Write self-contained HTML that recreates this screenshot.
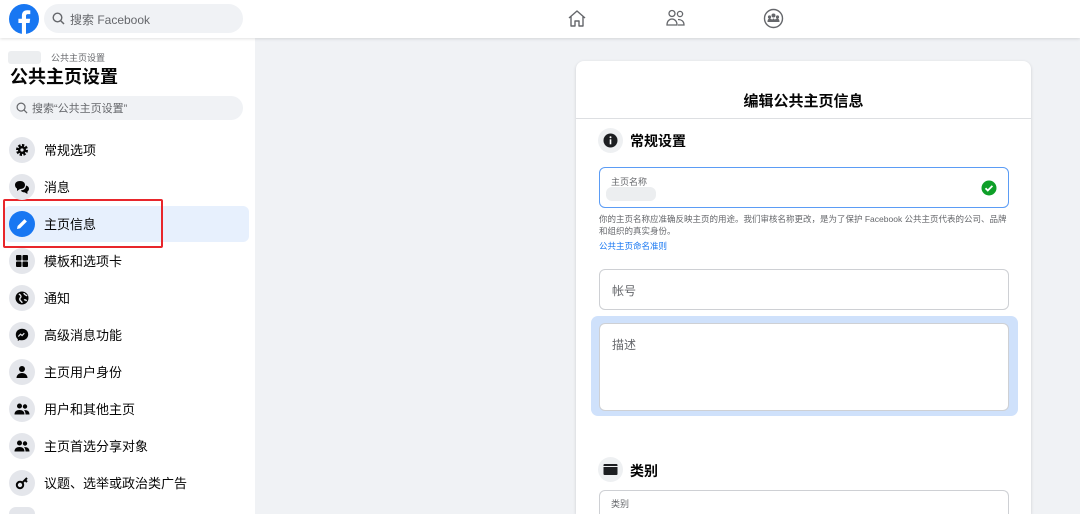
<!DOCTYPE html>
<html style="width:1080px;height:514px;overflow:hidden"><head><meta charset="utf-8"><style>
*{margin:0;padding:0;box-sizing:border-box}
body{width:1080px;height:514px;overflow:hidden;background:#f0f2f5;font-family:"Liberation Sans","Noto Sans CJK SC",sans-serif;color:#050505;position:relative}
.a{position:absolute}
.top{left:0;top:0;width:1080px;height:38px;background:#fff;box-shadow:0 1px 3px rgba(0,0,0,.12);z-index:2}
.side{left:0;top:38px;width:255px;height:476px;background:#fff}
.ic{width:26px;height:26px;border-radius:50%;background:#e4e6eb;left:9px}
.it{left:44px;font-size:13px;color:#050505}
.card{left:576px;top:61px;width:455px;height:453px;background:#fff;border-radius:8px 8px 0 0;box-shadow:0 1px 3px rgba(0,0,0,.15)}
.inp{border:1px solid #ced0d4;border-radius:6px;background:#fff}
</style></head><body>
<div class="a top">
 <svg class="a" style="left:9px;top:4px" width="30" height="30" viewBox="0 0 30 30"><circle cx="15" cy="15" r="15" fill="#1877f2"/><path d="M17 30V19h3.6l.6-4.2H17v-2.7c0-1.2.4-2 2.1-2h2.2V6.4c-.4 0-1.7-.2-3.2-.2-3.1 0-5.2 1.9-5.2 5.4v3.2H9.4V19h3.5v11z" fill="#fff"/></svg>
 <div class="a" style="left:44px;top:4px;width:199px;height:29px;border-radius:15px;background:#f0f2f5"></div>
 <svg class="a" style="left:52px;top:12px" width="13" height="13" viewBox="0 0 13 13"><circle cx="5.5" cy="5.5" r="4.3" fill="none" stroke="#65676b" stroke-width="1.4"/><path d="M8.6 8.6L12 12" stroke="#65676b" stroke-width="1.5"/></svg>
 <div class="a" style="left:70px;top:11px;font-size:12px;color:#65676b">搜索 Facebook</div>
 <svg class="a" style="left:567px;top:9px" width="20" height="19" viewBox="0 0 20 19"><path d="M2 9L10 2l8 7M4 7.5V17h4v-5h4v5h4V7.5" fill="none" stroke="#65676b" stroke-width="1.4" stroke-linejoin="round"/></svg>
 <svg class="a" style="left:666px;top:9px" width="20" height="18" viewBox="0 0 20 18"><circle cx="6" cy="4.5" r="3" fill="none" stroke="#65676b" stroke-width="1.3"/><circle cx="14" cy="5" r="2.6" fill="none" stroke="#65676b" stroke-width="1.3"/><path d="M1 16c0-4 2.5-6 5-6s5 2 5 6zM12 10.5c3 0 6 1.5 6 5.5h-6" fill="none" stroke="#65676b" stroke-width="1.3"/></svg>
 <svg class="a" style="left:763px;top:8px" width="21" height="21" viewBox="0 0 21 21"><circle cx="10.5" cy="10.5" r="9" fill="none" stroke="#65676b" stroke-width="1.4"/><circle cx="10.5" cy="7.5" r="2" fill="#65676b"/><circle cx="6.5" cy="9" r="1.6" fill="#65676b"/><circle cx="14.5" cy="9" r="1.6" fill="#65676b"/><path d="M4.5 14c0-2.5 1-3.5 2-3.5s2.5.5 2.5 1.5c.5-1 1-1.5 1.5-1.5s1 .5 1.5 1.5c0-1 1.5-1.5 2.5-1.5s2 1 2 3.5z" fill="#65676b"/></svg>
</div>
<div class="a side">
 <div class="a" style="left:8px;top:13px;width:33px;height:13px;background:#eceef0;border-radius:3px"></div>
 <div class="a" style="left:51px;top:13px;font-size:9px;color:#65676b">公共主页设置</div>
 <div class="a" style="left:10px;top:25px;font-size:18px;font-weight:bold">公共主页设置</div>
 <div class="a" style="left:10px;top:58px;width:233px;height:24px;border-radius:12px;background:#f0f2f5"></div>
 <svg class="a" style="left:16px;top:64px" width="12" height="12" viewBox="0 0 13 13"><circle cx="5.5" cy="5.5" r="4.3" fill="none" stroke="#65676b" stroke-width="1.3"/><path d="M8.6 8.6L12 12" stroke="#65676b" stroke-width="1.3"/></svg>
 <div class="a" style="left:32px;top:62px;font-size:11px;color:#65676b">搜索“公共主页设置”</div>
 <div class="a" style="left:4px;top:168px;width:245px;height:36px;border-radius:6px;background:#e7f0fd"></div>
 <div class="a" style="left:3px;top:161px;width:160px;height:49px;border:2px solid #e8262b;border-radius:2px"></div>
</div>
<div class="a ic" style="top:137px"></div><div class="a it" style="top:140px">常规选项</div>
<svg class="a" style="left:15px;top:143px" width="14" height="14" viewBox="0 0 14 14"><circle cx="7" cy="7" r="4.5" fill="none" stroke="#050505" stroke-width="3" stroke-dasharray="2.2 1.3"/><circle cx="7" cy="7" r="4" fill="#050505"/><circle cx="7" cy="7" r="1.6" fill="#e4e6eb"/></svg>
<div class="a ic" style="top:174px"></div><div class="a it" style="top:177px">消息</div>
<svg class="a" style="left:14px;top:180px" width="16" height="14" viewBox="0 0 16 14"><path d="M1 5c0-2.5 2-4 5-4s5 1.5 5 4-2 4-5 4l-3 2V8.5C1.8 8 1 6.5 1 5z" fill="#050505"/><path d="M12 5.5c2 .5 3 1.8 3 3.3 0 1.2-.6 2.2-1.6 2.8V14l-2.6-1.6c-2 0-3.4-.8-4-2 3 0 5.2-2 5.2-4.9z" fill="#050505"/></svg>
<div class="a" style="left:9px;top:211px;width:26px;height:26px;border-radius:50%;background:#1877f2"></div><div class="a it" style="top:214px">主页信息</div>
<svg class="a" style="left:15px;top:217px" width="14" height="14" viewBox="0 0 14 14"><path d="M2 12l.6-3L9.5 2.1l2.4 2.4L5 11.4z" fill="#fff"/></svg>
<div class="a ic" style="top:248px"></div><div class="a it" style="top:251px">模板和选项卡</div>
<svg class="a" style="left:15px;top:254px" width="14" height="14" viewBox="0 0 14 14"><rect x="1" y="1" width="5.5" height="5.5" rx="1" fill="#050505"/><rect x="7.5" y="1" width="5.5" height="5.5" rx="1" fill="#050505"/><rect x="1" y="7.5" width="5.5" height="5.5" rx="1" fill="#050505"/><rect x="7.5" y="7.5" width="5.5" height="5.5" rx="1" fill="#050505"/></svg>
<div class="a ic" style="top:285px"></div><div class="a it" style="top:288px">通知</div>
<svg class="a" style="left:15px;top:291px" width="14" height="14" viewBox="0 0 14 14"><circle cx="7" cy="7" r="6.5" fill="#050505"/><path d="M4 3c1 1 2 1 2 2.5S4 7 5 9s2 1 2 3M9 2c0 2 2 1.5 3 3M9 9c1-.5 2 0 2.5 1" stroke="#e4e6eb" stroke-width="1.4" fill="none"/></svg>
<div class="a ic" style="top:322px"></div><div class="a it" style="top:325px">高级消息功能</div>
<svg class="a" style="left:15px;top:328px" width="14" height="14" viewBox="0 0 14 14"><path d="M7 .8C3.5.8.8 3.3.8 6.7c0 1.8.7 3.3 2 4.4V13l1.8-1c.7.2 1.5.3 2.4.3 3.5 0 6.2-2.5 6.2-5.9S10.5.8 7 .8z" fill="#050505"/><path d="M3.3 8.5l2.2-2.3 1.6 1.3 2.2-2.3" stroke="#e4e6eb" stroke-width="1.2" fill="none"/></svg>
<div class="a ic" style="top:359px"></div><div class="a it" style="top:362px">主页用户身份</div>
<svg class="a" style="left:15px;top:365px" width="14" height="14" viewBox="0 0 14 14"><circle cx="7" cy="4" r="3" fill="#050505"/><path d="M1.5 13c0-3 2.5-5 5.5-5s5.5 2 5.5 5z" fill="#050505"/></svg>
<div class="a ic" style="top:396px"></div><div class="a it" style="top:399px">用户和其他主页</div>
<svg class="a" style="left:14px;top:403px" width="16" height="12" viewBox="0 0 16 12"><circle cx="5.5" cy="3" r="2.5" fill="#050505"/><circle cx="11" cy="3.5" r="2.2" fill="#050505"/><path d="M.5 11.5c0-3 2-4.5 5-4.5s5 1.5 5 4.5zM11.5 11.5c0-2-.5-3.5-1.5-4.3 3-.5 5.5.8 5.5 4.3z" fill="#050505"/></svg>
<div class="a ic" style="top:433px"></div><div class="a it" style="top:436px">主页首选分享对象</div>
<svg class="a" style="left:14px;top:440px" width="16" height="12" viewBox="0 0 16 12"><circle cx="5.5" cy="3" r="2.5" fill="#050505"/><circle cx="11" cy="3.5" r="2.2" fill="#050505"/><path d="M.5 11.5c0-3 2-4.5 5-4.5s5 1.5 5 4.5zM11.5 11.5c0-2-.5-3.5-1.5-4.3 3-.5 5.5.8 5.5 4.3z" fill="#050505"/></svg>
<div class="a ic" style="top:470px"></div><div class="a it" style="top:473px">议题、选举或政治类广告</div>
<svg class="a" style="left:15px;top:476px" width="14" height="14" viewBox="0 0 14 14"><circle cx="5" cy="9" r="3.2" fill="none" stroke="#050505" stroke-width="2"/><path d="M7.3 6.7L12 2M10 4l2 2" stroke="#050505" stroke-width="2"/></svg>
<div class="a ic" style="top:507px;height:7px;border-radius:13px 13px 0 0"></div>
<div class="a card"></div>
<div class="a" style="left:576px;top:90px;width:455px;text-align:center;font-size:15px;font-weight:bold">编辑公共主页信息</div>
<div class="a" style="left:576px;top:118px;width:455px;height:1px;background:#dddfe2"></div>
<div class="a" style="left:598px;top:128px;width:25px;height:25px;border-radius:50%;background:#eef0f2"></div>
<svg class="a" style="left:603px;top:133px" width="15" height="15" viewBox="0 0 15 15"><circle cx="7.5" cy="7.5" r="7" fill="#1c1e21"/><rect x="6.7" y="6.3" width="1.6" height="5" fill="#fff"/><circle cx="7.5" cy="4.3" r="1" fill="#fff"/></svg>
<div class="a" style="left:630px;top:131px;font-size:14px;font-weight:bold">常规设置</div>
<div class="a inp" style="left:599px;top:167px;width:410px;height:41px;border-color:#5b9cf5"></div>
<div class="a" style="left:611px;top:175px;font-size:9px;color:#65676b">主页名称</div>
<div class="a" style="left:606px;top:187px;width:50px;height:14px;background:#eceef0;border-radius:6px"></div>
<svg class="a" style="left:981px;top:180px" width="16" height="16" viewBox="0 0 16 16"><circle cx="8" cy="8" r="7.5" fill="#0e9f28"/><path d="M4.5 8.2l2.3 2.3 4.6-4.6" stroke="#fff" stroke-width="1.8" fill="none"/></svg>
<div class="a" style="left:599px;top:213px;width:412px;font-size:8.5px;line-height:12px;color:#65676b">你的主页名称应准确反映主页的用途。我们审核名称更改，是为了保护 Facebook 公共主页代表的公司、品牌和组织的真实身份。</div>
<div class="a" style="left:599px;top:240px;font-size:8.5px;color:#1877f2">公共主页命名准则</div>
<div class="a inp" style="left:599px;top:269px;width:410px;height:41px"></div>
<div class="a" style="left:612px;top:282px;font-size:12px;color:#65676b">帐号</div>
<div class="a" style="left:591px;top:316px;width:427px;height:100px;border-radius:7px;background:#cfe1fb"></div>
<div class="a inp" style="left:599px;top:323px;width:410px;height:88px"></div>
<div class="a" style="left:612px;top:336px;font-size:12px;color:#65676b">描述</div>
<div class="a" style="left:598px;top:457px;width:25px;height:25px;border-radius:50%;background:#eef0f2"></div>
<svg class="a" style="left:603px;top:463px" width="15" height="13" viewBox="0 0 15 13"><rect x="0.5" y="1" width="14" height="11" rx="1" fill="#1c1e21"/><rect x="0.5" y="3" width="14" height="1" fill="#eef0f2"/></svg>
<div class="a" style="left:630px;top:461px;font-size:14px;font-weight:bold">类别</div>
<div class="a inp" style="left:599px;top:490px;width:410px;height:30px;border-bottom:none;border-radius:6px 6px 0 0"></div>
<div class="a" style="left:611px;top:497px;font-size:9px;color:#65676b">类别</div>
</body></html>
